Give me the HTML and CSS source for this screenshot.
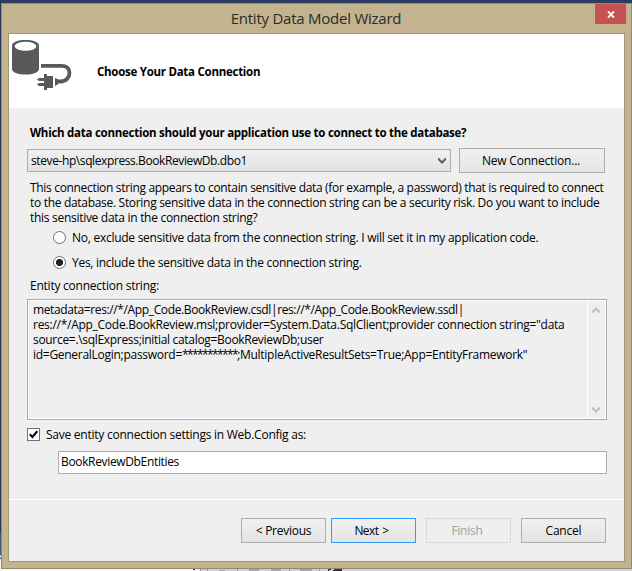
FILE: index.html
```
<!DOCTYPE html>
<html lang="en">
<head>
<meta charset="utf-8">
<title>Entity Data Model Wizard</title>
<link rel="stylesheet" href="styles.css">
</head>
<body>
<div class="desktop">
  <svg class="toolbar" width="632" height="38" viewBox="0 533 632 38" shape-rendering="crispEdges">
    <path fill="#43587f" d="M0 533h1v22H0z"/>
    <path fill="#f7f7f9" d="M0 559h200v12H0z"/>
    <path fill="#c9d0e0" d="M200 559h432v12H200zM0 555h1v3H0z"/>
    <path fill="#8b93a5" d="M200 569h1v2h-1zM207 569h1v2h-1zM237 569h1v2h-1zM289 569h1v2h-1zM319 569h1v2h-1z"/>
    <path fill="#a0a6b6" d="M219 570h6v1h-6zM249 569h10v2h-10zM271 569h10v2h-10zM300 569h12v2h-12z"/>
    <path fill="#333" d="M193 569h2v1h-2zM328 569h3v1h-2v1h-1zM334 569h8v2h-9v-1h1z"/>
  </svg>
</div>
<main class="dialog">
  <header class="titlebar">
    <h1 class="title"><span class="t-title">Entity Data Model Wizard</span></h1>
    <button class="close" aria-label="Close">
      <svg width="8" height="7" viewBox="0 0 8 7"><path d="M1 .4 7 6.6M7 .4 1 6.6" stroke="#fff" stroke-width="1.9"/></svg>
    </button>
  </header>
  <section class="client">
    <div class="banner">
      <svg class="db" width="62" height="52" viewBox="0 0 62 52">
        <path fill="#58595b" d="M1 6.500C1 3 7 1 14.500 1S28 3 28 6.500V30c0 3.500-6 5.500-13.500 5.500S1 33.500 1 30z"/>
        <ellipse cx="14.500" cy="7.300" rx="10.800" ry="4.500" fill="#fff"/>
        <path d="M30 26.800h20.500c5 0 8 2.800 8 7.200s-3.500 8.500-9 8.500H46" fill="none" stroke="#58595b" stroke-width="3.800"/>
        <path fill="#58595b" d="M44 39l3 1.200v5L44 47zM33 35h3v2h6v12h-6v2h-3zM28 39h5v3h-5l-2-1.500zM28 44h5v3h-5l-2-1.500z"/>
      </svg>
      <h2 class="heading"><span class="t-head">Choose Your Data Connection</span></h2>
    </div>
    <div class="form">
      <div class="question"><span class="t-q">Which data connection should your application use to connect to the database?</span></div>
      <div class="source">
        <div class="combo"><span class="t-combo">steve-hp\sqlexpress.BookReviewDb.dbo1</span>
          <svg width="8" height="7" viewBox="0 0 8 7"><path d="M0 1h1l3 3 3-3h1v2L4 7 0 3z" fill="#606060"/></svg>
        </div>
        <button class="btn wide"><span class="t-new">New Connection...</span></button>
      </div>
      <p class="note">
        <span class="t-n1">This connection string appears to contain sensitive data (for example, a password) that is required to connect</span><br>
        <span class="t-n2">to the database. Storing sensitive data in the connection string can be a security risk. Do you want to include</span><br>
        <span class="t-n3">this sensitive data in the connection string?</span>
      </p>
      <div class="option"><i class="radio"></i><span class="t-r1">No, exclude sensitive data from the connection string. I will set it in my application code.</span></div>
      <div class="option"><i class="radio on"></i><span class="t-r2">Yes, include the sensitive data in the connection string.</span></div>
      <div class="label"><span class="t-lab">Entity connection string:</span></div>
      <div class="memo">
        <div class="memo-text">
          <span class="t-m1">metadata=res://*/App_Code.BookReview.csdl|res://*/App_Code.BookReview.ssdl|</span><br>
          <span class="t-m2">res://*/App_Code.BookReview.msl;provider=System.Data.SqlClient;provider connection string="data</span><br>
          <span class="t-m3">source=.\sqlExpress;initial catalog=BookReviewDb;user</span><br>
          <span class="t-m4">id=GeneralLogin;password=<span class="stars">***********</span>;MultipleActiveResultSets=True;App=EntityFramework"</span>
        </div>
        <div class="scroll">
          <svg width="8" height="7" viewBox="0 0 8 7"><path d="M0 6h1l3-3 3 3h1V4L4 0 0 4z" fill="#bfbfbf"/></svg>
          <svg width="8" height="7" viewBox="0 0 8 7"><path d="M0 1h1l3 3 3-3h1v2L4 7 0 3z" fill="#bfbfbf"/></svg>
        </div>
      </div>
      <div class="save">
        <span class="check"><svg width="9" height="9" viewBox="0 0 9 9"><path d="M.8 4.300 3.400 7 8.300 1.200" fill="none" stroke="#000" stroke-width="2"/></svg></span>
        <span class="t-save">Save entity connection settings in Web.Config as:</span>
      </div>
      <div class="field"><span class="t-ent">BookReviewDbEntities</span></div>
    </div>
    <footer class="actions">
      <button class="btn"><span class="t-prev">&lt; Previous</span></button>
      <button class="btn default"><span class="t-next">Next &gt;</span></button>
      <button class="btn disabled"><span class="t-fin">Finish</span></button>
      <button class="btn"><span class="t-can">Cancel</span></button>
    </footer>
  </section>
</main>
</body>
</html>
```
FILE: styles.css
```
* { box-sizing: border-box; margin: 0; padding: 0; }
body {
  width: 632px;
  height: 571px;
  overflow: hidden;
  position: relative;
  font: 12px/15px "Open Sans", "Noto Sans", sans-serif;
  color: #000;
}
span { white-space: nowrap; }
.desktop {
  position: absolute;
  inset: 0;
  background: #2b3c5f;
  display: flex;
  align-items: flex-end;
}
.dialog {
  position: relative;
  width: 631px;
  height: 566px;
  margin: 3px 0 0 1px;
  padding: 0 6px 6px;
  border: 1px solid #968a6c;
  background: #c4b38f;
}
.titlebar { display: flex; height: 29px; }
.title {
  flex: 1;
  padding: 4px 0 0 29px;
  text-align: center;
  font-size: 15px;
  line-height: 20px;
  font-weight: 400;
  color: #2b2b2b;
}
.close {
  width: 31px;
  height: 20px;
  margin-right: -1px;
  border: 0;
  background: #c75050;
  display: flex;
  align-items: center;
  justify-content: center;
}
.client {
  height: 529px;
  width: 617px;
  border: 1px solid #a39575;
  background: #efefef;
}
.banner { display: flex; height: 74px; background: #fff; }
.db { margin: 5px 0 0 2px; }
.heading { margin: 30px 0 0 24px; font-size: 11.5px; font-weight: 700; }
.form { height: 391px; padding: 17px 17px 0 18px; }
.question { padding-left: 3px; font-size: 11.5px; font-weight: 700; }
.source { display: flex; gap: 8px; align-items: center; margin-top: 8px; }
.combo {
  display: flex;
  justify-content: space-between;
  align-items: center;
  width: 424px;
  height: 23px;
  padding: 0 4px 0 3px;
  border: 1px solid #acacac;
  background: linear-gradient(#f0f0f0, #e3e3e3);
}
.btn {
  width: 85px;
  height: 25px;
  padding-bottom: 1px;
  border: 1px solid #acacac;
  background: linear-gradient(#f0f0f0, #e4e4e4);
  font: inherit;
  color: #000;
}
.wide { width: 146px; padding-right: 2px; }
.default { margin-left: -5px; padding-right: 4px; border-color: #3399ff; }
.disabled { padding-right: 3px; border-color: #d9d9d9; background: #efefef; color: #a0a0a0; }
.note { margin: 7px 0 0 3px; }
.option { display: flex; align-items: center; gap: 6px; height: 15px; margin: 5px 0 0 26px; }
.option + .option { margin-top: 10px; }
.radio {
  width: 13px;
  height: 13px;
  border: 1px solid #707070;
  border-radius: 50%;
  background: #fff;
}
.on { background: radial-gradient(circle, #212121 3.200px, #fff 3.900px); }
.label { margin: 8px 0 0 3px; }
.memo {
  display: flex;
  justify-content: space-between;
  width: 580px;
  height: 121px;
  margin-top: 6px;
  border: 1px solid #acacac;
  box-shadow: inset 0 0 0 1px #fff;
}
.memo-text { padding: 2px 0 0 5px; }
.scroll {
  display: flex;
  flex-direction: column;
  justify-content: space-between;
  align-items: center;
  width: 18px;
  margin: 1px;
  padding: 6px 1px 5px 0;
  border-left: 1px solid #fff;
}
.save { display: flex; align-items: center; gap: 6px; height: 15px; margin-top: 7px; }
.check {
  display: flex;
  align-items: center;
  justify-content: center;
  width: 13px;
  height: 13px;
  border: 1px solid #707070;
  background: #fff;
}
.field {
  width: 549px;
  height: 23px;
  margin: 9px 0 0 31px;
  padding: 2px 2px 0;
  border: 1px solid #abadb3;
  background: #fff;
}
.actions {
  display: flex;
  justify-content: flex-end;
  gap: 10px;
  height: 62px;
  padding: 18px 18px 0 0;
  border-top: 1px solid #fff;
}

/* Tracking per text run */
.t-title { letter-spacing: -0.24px; }
.t-head { letter-spacing: -0.27px; }
.t-q { letter-spacing: -0.26px; }
.t-combo { letter-spacing: -0.4px; }
.t-new { letter-spacing: -0.2px; }
.t-n1 { letter-spacing: -0.325px; }
.t-n2 { letter-spacing: -0.305px; }
.t-n3 { letter-spacing: -0.29px; }
.t-r1 { letter-spacing: -0.264px; }
.t-r2 { letter-spacing: -0.28px; }
.t-lab { letter-spacing: -0.236px; }
.t-m1 { letter-spacing: -0.372px; }
.t-m2 { letter-spacing: -0.273px; }
.t-m3 { letter-spacing: -0.31px; }
.t-m4 { letter-spacing: -0.28px; }
.stars { letter-spacing: -1.6px; }
.t-save { letter-spacing: -0.245px; }
.t-ent { letter-spacing: -0.345px; }
.t-prev { letter-spacing: -0.25px; }
.t-next { letter-spacing: -0.6px; word-spacing: 1.5px; }
.t-fin { letter-spacing: -0.25px; }
.t-can { letter-spacing: -0.2px; }
```
